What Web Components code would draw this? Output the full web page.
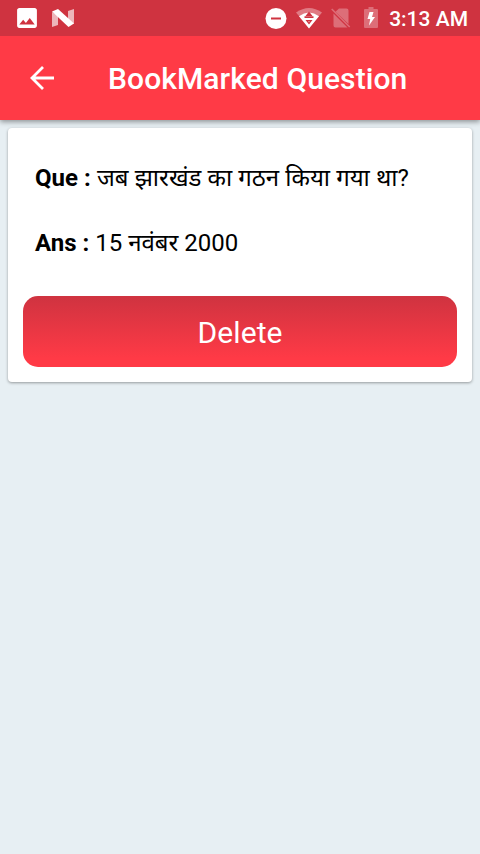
<!DOCTYPE html>
<html lang="hi"><head><meta charset="utf-8"><title>BookMarked Question</title>
<style>html,body{margin:0;background:#e7eff3;font-family:Roboto,"Noto Sans",sans-serif}</style></head>
<body><bookmark-screen></bookmark-screen>
<script>
const define=(name,html)=>customElements.define(name,class extends HTMLElement{
  constructor(){super();this.attachShadow({mode:'open'}).innerHTML=html}
});
define('status-bar',`<style>
:host{display:flex;box-sizing:border-box;height:36px;background:#cf3340;color:#fff;align-items:center;padding:0 12px 0 16px;position:relative;z-index:2}
svg{display:block;flex:none}
.n{margin-left:13px}.s{flex:1}.wifi{margin-left:9px}.sim{margin-left:9px}.bat{margin-left:13px}
.t{font-size:21px;font-weight:500;line-height:36px;height:35px;margin-left:11px;white-space:nowrap}
</style>
<svg width="22" height="22" viewBox="2 2 20 20" fill="#fff"><path d="M21 19V5c0-1.100-.9-2-2-2H5c-1.100 0-2 .9-2 2v14c0 1.100.9 2 2 2h14c1.100 0 2-.9 2-2zM8.500 13.500l2.500 3.010L14.500 12l4.500 6H5l3.500-4.500z"/></svg>
<svg class="n" width="24" height="20" viewBox="0 0 24 20"><path fill="#edb5ba" d="M1 4v15l6-2V7zM17 3l6-2v15l-6-4z"/><path fill="#fff" d="M1 3.500L7 1l16 14.500-5.500 3.500z"/></svg>
<span class="s"></span>
<svg width="22" height="22" viewBox="0 0 22 22"><circle cx="11" cy="11.500" r="10.500" fill="#fff"/><path fill="#cf3340" d="M6 10.500h10v2H6z"/></svg>
<svg class="wifi" width="26" height="22" viewBox="0 0 26 22"><path fill="#e07a83" d="M0 5.500Q13-3.500 26 5.500L13 21z"/><path fill="#fff" d="M3 9.200Q13 2 23 9.200L13 21.500z"/><path fill="#cf3340" d="M13 4.500l3.500 4.500h-7zM8.500 9.200h9v1.800h-9zM9.500 13h7L13 17.500z"/><path fill="#fff" d="M12.300 14.300h1.400L13 15.500z"/></svg>
<svg class="sim" width="20" height="22" viewBox="0 0 20 22"><path fill="#dd6e78" d="M8 1.500h7.500q2 0 2 2v13.500L4.500 4.800zM2.500 6.500l14 14h-12q-2 0-2-2z"/><path stroke="#dd6e78" stroke-width="1.500" d="M.7 2l18 18"/></svg>
<svg class="bat" width="14" height="22" viewBox="0 0 14 22"><path fill="#dd6e78" d="M4.500 0h5v2H13q1 0 1 1v17q0 1-1 1H1q-1 0-1-1V3q0-1 1-1h3.500z"/><path fill="#fff" d="M5.500 5h4L8 10h3l-6 8.500 1.200-6.500H3.500z"/></svg>
<div class="t">3:13 AM</div>`);
define('app-bar',`<style>
:host{display:flex;align-items:center;height:84px;background:#ff3a46;color:#fff;box-shadow:0 2px 5px rgba(0,0,0,.38);position:relative}
svg{display:block;margin-left:30px;flex:none}
h1{margin:0 0 0 54px;font-size:30px;font-weight:500;line-height:84px;padding-top:2px;letter-spacing:.09px;white-space:nowrap}
</style>
<svg width="24" height="24" viewBox="0 0 24 24" fill="none" stroke="#fff" stroke-width="2.800"><path d="M24 12H2M13 1L2 12l11 11"/></svg>
<h1><slot></slot></h1>`);
define('text-row',`<style>
:host{display:block;height:65px;font-size:24px;line-height:65px;color:#000;padding-left:27px;white-space:nowrap}
b{font-weight:700}
</style><b><slot name="label"></slot></b> <slot></slot>`);
define('action-button',`<style>
:host{display:block;margin:0 15px}
button{display:block;width:100%;height:71px;border:0;padding:2px 0 0;border-radius:15px;background:linear-gradient(#cf3340,#ff3a46 88%);color:#fff;font:400 30px Roboto,sans-serif;letter-spacing:.1px}
</style><button><slot></slot></button>`);
define('question-card',`<style>
:host{display:block;box-sizing:border-box;height:254px;margin:8px;padding-top:18px;background:#fff;border-radius:4px;box-shadow:0 1px 3px rgba(0,0,0,.36)}
.q{word-spacing:.2px}
action-button{margin-top:20px}
</style>
<text-row class="q"><span slot="label">Que :</span>जब झारखंड का गठन किया गया था?</text-row>
<text-row><span slot="label">Ans :</span>15 नवंबर 2000</text-row>
<action-button>Delete</action-button>`);
define('bookmark-screen',`<style>:host{display:block;min-height:854px;background:#e7eff3}</style>
<status-bar></status-bar><app-bar>BookMarked Question</app-bar><question-card></question-card>`);
</script></body></html>
